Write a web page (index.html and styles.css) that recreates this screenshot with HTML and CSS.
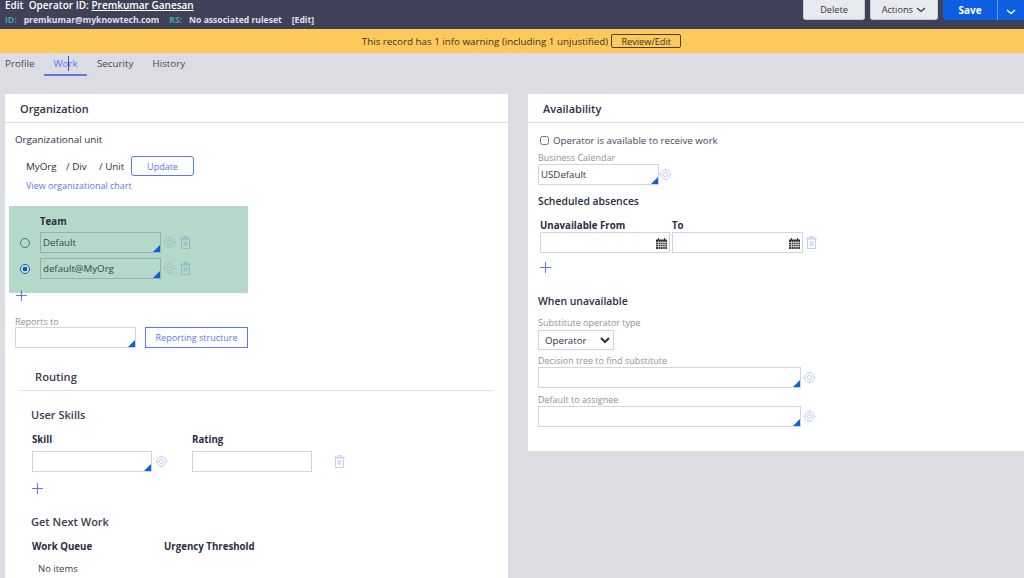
FILE: index.html
```html
<!DOCTYPE html>
<html lang="en">
<head>
    <meta charset="UTF-8">
    <meta name="viewport" content="width=device-width, initial-scale=1.0">
    <title>Edit Operator ID</title>
    <link rel="stylesheet" href="styles.css">
</head>
<body>

    <svg class="icon-defs" width="0" height="0">
        <symbol id="gear" viewBox="0 0 13 13">
            <circle cx="6.5" cy="6.5" r="4.6" fill="none" stroke="currentColor" stroke-width="0.9"/>
            <circle cx="6.5" cy="6.5" r="2.1" fill="none" stroke="currentColor" stroke-width="0.9"/>
            <path d="M6.5 0.5v1.4M6.5 11.1v1.4M0.5 6.5h1.4M11.1 6.5h1.4" stroke="currentColor" stroke-width="0.9"/>
        </symbol>
        <symbol id="trash" viewBox="0 0 11 13">
            <path d="M1.5 3h8v9.5h-8zM0 2.2h11M4 2V.6h3V2" fill="none" stroke="currentColor"/>
            <rect x="3.5" y="5" width="4" height="5" fill="currentColor" opacity="0.6"/>
        </symbol>
        <symbol id="plus" viewBox="0 0 11 11">
            <path d="M5.5 0v11M0 5.5h11" stroke="currentColor"/>
        </symbol>
        <symbol id="calendar" viewBox="0 0 11 11">
            <path d="M0 1.5h11V11H0z" fill="#333"/>
            <path d="M2.5 0v2M8.5 0v2" stroke="#333"/>
            <path d="M0 4.5h11M0 6.5h11M0 8.5h11M2.5 3v8M4.7 3v8M6.9 3v8M9 3v8" stroke="#fff" stroke-width="0.6"/>
        </symbol>
    </svg>

    <!-- Header -->
    <header class="top-bar">
        <div class="top-info">
            <div class="top-title">Edit&nbsp; Operator ID: <u>Premkumar Ganesan</u></div>
            <div class="top-meta">
                <span class="meta-key">ID:</span>
                <span class="meta-id">premkumar@myknowtech.com</span>
                <span class="meta-key">RS:</span>
                <span class="meta-rs">No associated ruleset</span>
                <span class="meta-edit">[Edit]</span>
            </div>
        </div>
        <div class="top-actions">
            <button class="btn-top btn-delete">Delete</button>
            <button class="btn-top btn-actions">Actions
                <svg width="10" height="6" viewBox="0 0 10 6"><path d="M1 1l4 3.5L9 1" fill="none" stroke="currentColor" stroke-width="1.2"/></svg>
            </button>
            <div class="save-group">
                <button class="btn-save">Save</button>
                <button class="btn-save-more">
                    <svg width="10" height="6" viewBox="0 0 10 6"><path d="M1 1l4 3.5L9 1" fill="none" stroke="#fff" stroke-width="1.4"/></svg>
                </button>
            </div>
        </div>
    </header>

    <div class="warning-bar">
        <span>This record has 1 info warning (including 1 unjustified)</span>
        <button class="btn-review">Review/Edit</button>
    </div>

    <nav class="tabs">
        <a class="tab">Profile</a>
        <a class="tab tab-active">Work<span class="text-caret"></span></a>
        <a class="tab">Security</a>
        <a class="tab">History</a>
    </nav>

    <main class="columns">
        <!-- Organization -->
        <section class="card card-left">
            <h2 class="card-title">Organization</h2>

            <div class="org-label">Organizational unit</div>
            <div class="org-row">
                <span class="org-path">MyOrg</span>
                <span class="org-path org-div">/ Div</span>
                <span class="org-path org-unit">/ Unit</span>
                <button class="btn-update">Update</button>
            </div>
            <a class="org-link">View organizational chart</a>

            <div class="team-box">
                <div class="bold-label team-label">Team</div>
                <div class="team-row">
                    <span class="radio"></span>
                    <span class="field field-team lookup"><input value="Default"></span>
                    <svg class="icon icon-gear"><use href="#gear"/></svg>
                    <svg class="icon icon-trash"><use href="#trash"/></svg>
                </div>
                <div class="team-row">
                    <span class="radio radio-on"></span>
                    <span class="field field-team lookup"><input value="default@MyOrg"></span>
                    <svg class="icon icon-gear"><use href="#gear"/></svg>
                    <svg class="icon icon-trash"><use href="#trash"/></svg>
                </div>
            </div>
            <svg class="icon-plus plus-team"><use href="#plus"/></svg>

            <div class="small-label reports-label">Reports to</div>
            <div class="reports-row">
                <span class="field field-reports lookup"><input></span>
                <button class="btn-structure">Reporting structure</button>
            </div>

            <h3 class="routing-title">Routing</h3>

            <h4 class="sub-title skills-title">User Skills</h4>
            <div class="skills-head">
                <span class="bold-label skill-col">Skill</span>
                <span class="bold-label">Rating</span>
            </div>
            <div class="skills-row">
                <span class="field field-skill lookup"><input></span>
                <svg class="icon icon-gear"><use href="#gear"/></svg>
                <span class="field field-rating"><input></span>
                <svg class="icon icon-trash icon-light"><use href="#trash"/></svg>
            </div>
            <svg class="icon-plus plus-skill"><use href="#plus"/></svg>

            <h4 class="sub-title next-title">Get Next Work</h4>
            <div class="next-head">
                <span class="bold-label queue-col">Work Queue</span>
                <span class="bold-label">Urgency Threshold</span>
            </div>
            <div class="no-items">No items</div>
        </section>

        <!-- Availability -->
        <section class="card card-right">
            <h2 class="card-title">Availability</h2>

            <label class="check-row">
                <input type="checkbox">
                <span>Operator is available to receive work</span>
            </label>

            <div class="small-label calendar-label">Business Calendar</div>
            <div class="field-row calendar-row">
                <span class="field field-team lookup"><input value="USDefault"></span>
                <svg class="icon icon-gear"><use href="#gear"/></svg>
            </div>

            <div class="block-title absences-title">Scheduled absences</div>
            <div class="absence-head">
                <span class="bold-label from-col">Unavailable From</span>
                <span class="bold-label">To</span>
            </div>
            <div class="absence-row">
                <span class="field field-date"><input><svg class="icon-calendar"><use href="#calendar"/></svg></span>
                <span class="field field-date"><input><svg class="icon-calendar"><use href="#calendar"/></svg></span>
                <svg class="icon icon-trash icon-light"><use href="#trash"/></svg>
            </div>
            <svg class="icon-plus plus-absence"><use href="#plus"/></svg>

            <div class="block-title unavailable-title">When unavailable</div>
            <div class="small-label substitute-label">Substitute operator type</div>
            <select class="select-type"><option>Operator</option></select>

            <div class="small-label tree-label">Decision tree to find substitute</div>
            <div class="field-row">
                <span class="field field-wide lookup"><input></span>
                <svg class="icon icon-gear"><use href="#gear"/></svg>
            </div>

            <div class="small-label assignee-label">Default to assignee</div>
            <div class="field-row">
                <span class="field field-wide lookup"><input></span>
                <svg class="icon icon-gear"><use href="#gear"/></svg>
            </div>
        </section>
    </main>

</body>
</html>
```

FILE: styles.css
```css
html, body {
    height: 100%;
}

body {
    margin: 0;
    overflow: hidden;
    background: #dcdde2;
    font-family: 'Open Sans', sans-serif;
    font-size: 10px;
    color: #2b2d42;
}

button {
    font-family: inherit;
    cursor: pointer;
}

.icon-defs {
    position: absolute;
}

/* Header */
.top-bar {
    display: flex;
    justify-content: space-between;
    height: 29px;
    background: #3f4158;
    color: #fff;
}

.top-info {
    padding-left: 5px;
}

.top-title {
    font-size: 10px;
    font-weight: 600;
    line-height: 11px;
}

.top-meta {
    display: flex;
    margin-top: 2px;
    font-size: 8.6px;
    font-weight: 700;
    line-height: 14px;
    color: #dfe2ee;
}

.meta-key {
    color: #4f9ea6;
}

.meta-id {
    margin-left: 7px;
}

.meta-id + .meta-key {
    margin-left: 10px;
}

.meta-rs {
    margin-left: 7px;
}

.meta-edit {
    margin-left: 10px;
}

.top-actions {
    display: flex;
    gap: 5px;
    height: 20px;
}

.btn-top {
    padding: 0;
    border: 1px solid #c9cbd4;
    border-top: 0;
    border-radius: 0 0 3px 3px;
    background: #e9eaef;
    color: #33354c;
    font-size: 9.2px;
}

.btn-delete {
    width: 62px;
}

.btn-actions {
    width: 68px;
}

.btn-actions svg {
    margin-left: 1px;
}

.save-group {
    display: flex;
    width: 81px;
    background: #0b5fe0;
    border-bottom-left-radius: 3px;
}

.btn-save {
    width: 55px;
    padding: 0;
    border: 0;
    border-right: 1px solid #6c9aea;
    background: none;
    color: #fff;
    font-size: 10px;
    font-weight: 700;
}

.btn-save-more {
    flex: 1;
    padding: 0;
    border: 0;
    background: none;
}

.warning-bar {
    display: flex;
    justify-content: center;
    align-items: center;
    gap: 3px;
    height: 24px;
    padding-left: 19px;
    background: #fdc95c;
    color: #3a3324;
    font-size: 9.8px;
}

.btn-review {
    width: 70px;
    height: 14px;
    padding: 0;
    border: 1px solid #4a3f24;
    border-radius: 2px;
    background: none;
    color: #3a3324;
    font-size: 9.2px;
    line-height: 11px;
}

/* Tabs */
.tabs {
    display: flex;
    height: 23px;
    padding-left: 5px;
}

.tab {
    position: relative;
    padding-top: 4px;
    line-height: 14px;
    font-size: 9.8px;
    color: #44465a;
}

.tab:nth-child(1) {
    width: 30px;
}

.tab:nth-child(2) {
    width: 43px;
    margin-left: 9px;
    text-align: center;
    box-sizing: border-box;
}

.tab:nth-child(3) {
    margin-left: 10px;
}

.tab:nth-child(4) {
    margin-left: 19px;
}

.tab-active {
    color: #5b76ef;
    border-bottom: 2px solid #5b76ef;
}

.text-caret {
    position: absolute;
    top: 3px;
    left: 24px;
    width: 1px;
    height: 15px;
    background: #2a52cf;
}

/* Cards */
.columns {
    display: flex;
    align-items: flex-start;
    gap: 20px;
    padding: 18px 0 0 5px;
}

.card {
    background: #fff;
    box-sizing: border-box;
}

.card-left {
    width: 503px;
    height: 484px;
}

.card-right {
    flex: 1;
    height: 357px;
    padding-left: 10px;
}

.card-title {
    height: 28px;
    margin: 0;
    padding-left: 15px;
    border-bottom: 1px solid #dedfe5;
    font-size: 11px;
    font-weight: 600;
    line-height: 30px;
    color: #2f3147;
}

.card-right .card-title {
    margin-left: -10px;
}

.bold-label {
    font-size: 9.7px;
    font-weight: 700;
    color: #2b2d42;
}

.small-label {
    font-size: 9px;
    line-height: 11px;
    color: #8f9099;
}

/* Fields */
.field {
    position: relative;
    display: inline-block;
    box-sizing: border-box;
    height: 21px;
    flex: none;
    border: 1px solid #d3d5dc;
    background: #fff;
}

.field input {
    display: block;
    box-sizing: border-box;
    width: 100%;
    height: 100%;
    padding: 0 2px;
    border: 0;
    outline: 0;
    background: transparent;
    font-family: inherit;
    font-size: 9.7px;
    color: #33354c;
}

.lookup::after {
    content: "";
    position: absolute;
    right: 0;
    bottom: 0;
    border-style: solid;
    border-width: 0 0 7px 7px;
    border-color: transparent transparent #0b5fe0 transparent;
}

.field-team,
.field-reports {
    width: 121px;
}

.field-skill,
.field-rating {
    width: 120px;
}

.field-date {
    width: 130px;
}

.field-date + .field-date {
    width: 131px;
}

.field-wide {
    width: 263px;
}

.icon {
    flex: none;
}

.icon-gear {
    width: 13px;
    height: 13px;
    color: #b9c5ea;
}

.icon-trash {
    width: 11px;
    height: 13px;
    color: #a9c0e6;
}

.icon-light {
    color: #c2cff0;
}

.icon-plus {
    display: block;
    width: 11px;
    height: 11px;
    color: #5b76ef;
}

.icon-calendar {
    position: absolute;
    top: 5px;
    right: 2px;
    width: 11px;
    height: 11px;
}

/* Organization */
.org-label {
    margin: 9px 0 0 10px;
    line-height: 15px;
    font-size: 9.8px;
}

.org-row {
    display: flex;
    align-items: center;
    height: 20px;
    margin: 9px 0 0 21px;
    font-size: 9.8px;
}

.org-path:first-child {
    width: 31px;
}

.org-div {
    width: 24px;
    margin-left: 9px;
}

.org-unit {
    width: 28px;
    margin-left: 9px;
}

.btn-update {
    width: 63px;
    height: 20px;
    margin-left: 4px;
    padding: 0;
    border: 1px solid #5b76ef;
    border-radius: 3px;
    background: #fff;
    color: #5b76ef;
    font-size: 9px;
}

.org-link {
    display: block;
    margin: 3px 0 0 21px;
    line-height: 14px;
    font-size: 9px;
    color: #5b76ef;
}

.team-box {
    width: 239px;
    height: 87px;
    margin: 13px 0 0 4px;
    padding-top: 9px;
    box-sizing: border-box;
    background: #b4d9cb;
}

.team-label {
    display: block;
    margin-left: 31px;
    line-height: 14px;
}

.team-row {
    display: flex;
    align-items: center;
    height: 21px;
    margin-top: 5px;
}

.team-label + .team-row {
    margin-top: 3px;
}

.team-row .field {
    margin-left: 10px;
    border-color: #93b3a6;
    background: #b4d9cb;
}

.team-row .field input {
    color: #2f4b44;
}

.team-row .icon-gear {
    margin-left: 2px;
    color: #93bcc4;
}

.team-row .icon-trash {
    margin-left: 4px;
    color: #8fb9c6;
}

.radio {
    box-sizing: border-box;
    width: 10px;
    height: 10px;
    margin-left: 11px;
    border: 1px solid #5b6a68;
    border-radius: 50%;
}

.radio-on {
    border-color: #0b5fa8;
    background: radial-gradient(circle, #0b5fa8 40%, #d3e8ea 46%);
}

.plus-team {
    margin: -3px 0 0 11px;
}

.reports-label {
    margin: 15px 0 0 10px;
}

.reports-row {
    display: flex;
    gap: 9px;
    margin: 0 0 0 10px;
}

.btn-structure {
    width: 103px;
    height: 21px;
    padding: 0;
    border: 1px solid #5b76ef;
    background: #fff;
    color: #5b76ef;
    font-size: 9px;
}

.routing-title {
    height: 26px;
    margin: 16px 0 0 16px;
    padding-left: 14px;
    width: 458px;
    border-bottom: 1px solid #dedfe5;
    font-size: 11.2px;
    font-weight: 600;
    line-height: 26px;
    color: #3b3d50;
}

.sub-title {
    margin: 0 0 0 26px;
    font-size: 11px;
    font-weight: 600;
    line-height: 16px;
    color: #3b3d50;
}

.skills-title {
    margin-top: 16px;
}

.skills-head {
    display: flex;
    margin: 10px 0 0 27px;
    line-height: 14px;
}

.skill-col {
    width: 160px;
}

.skills-row {
    display: flex;
    align-items: center;
    margin: 4px 0 0 27px;
}

.skills-row .icon-gear {
    margin-left: 3px;
}

.skills-row .field-rating {
    margin-left: 24px;
}

.skills-row .icon-trash {
    margin-left: 22px;
}

.plus-skill {
    margin: 11px 0 0 27px;
}

.next-title {
    margin-top: 20px;
}

.next-head {
    display: flex;
    margin: 10px 0 0 27px;
    line-height: 14px;
}

.queue-col {
    width: 132px;
}

.no-items {
    margin: 8px 0 0 33px;
    font-size: 9.5px;
    line-height: 14px;
    color: #3b3d50;
}

/* Availability */
.check-row {
    display: flex;
    align-items: center;
    height: 14px;
    margin: 10px 0 0 2px;
    font-size: 9.7px;
    color: #44465a;
}

.check-row input {
    width: 9px;
    height: 9px;
    margin: 0 4px 0 0;
}

.calendar-label {
    margin-top: 5px;
}

.field-row {
    display: flex;
    align-items: center;
    margin-top: 1px;
}

.field-row .icon-gear {
    margin: 0 0 0 2px;
}

.calendar-row .icon-gear {
    margin: 0;
}

.block-title {
    font-size: 10.4px;
    font-weight: 600;
    line-height: 14px;
    color: #2b2d42;
}

.absences-title {
    margin-top: 9px;
}

.absence-head {
    display: flex;
    margin: 12px 0 0 2px;
    line-height: 12px;
}

.from-col {
    width: 132px;
}

.absence-row {
    display: flex;
    align-items: center;
    gap: 2px;
    margin: 0 0 0 2px;
}

.absence-row .icon-trash {
    margin-left: 1px;
}

.plus-absence {
    margin: 9px 0 0 2px;
}

.unavailable-title {
    margin-top: 21px;
}

.substitute-label {
    margin-top: 9px;
}

.select-type {
    display: block;
    box-sizing: border-box;
    width: 76px;
    height: 20px;
    margin-top: 2px;
    padding: 0 2px;
    border: 1px solid #d3d5dc;
    background: #fff;
    font-family: inherit;
    font-size: 9.7px;
    color: #2f3147;
}

.tree-label {
    margin-top: 5px;
}

.assignee-label {
    margin-top: 6px;
}
```
